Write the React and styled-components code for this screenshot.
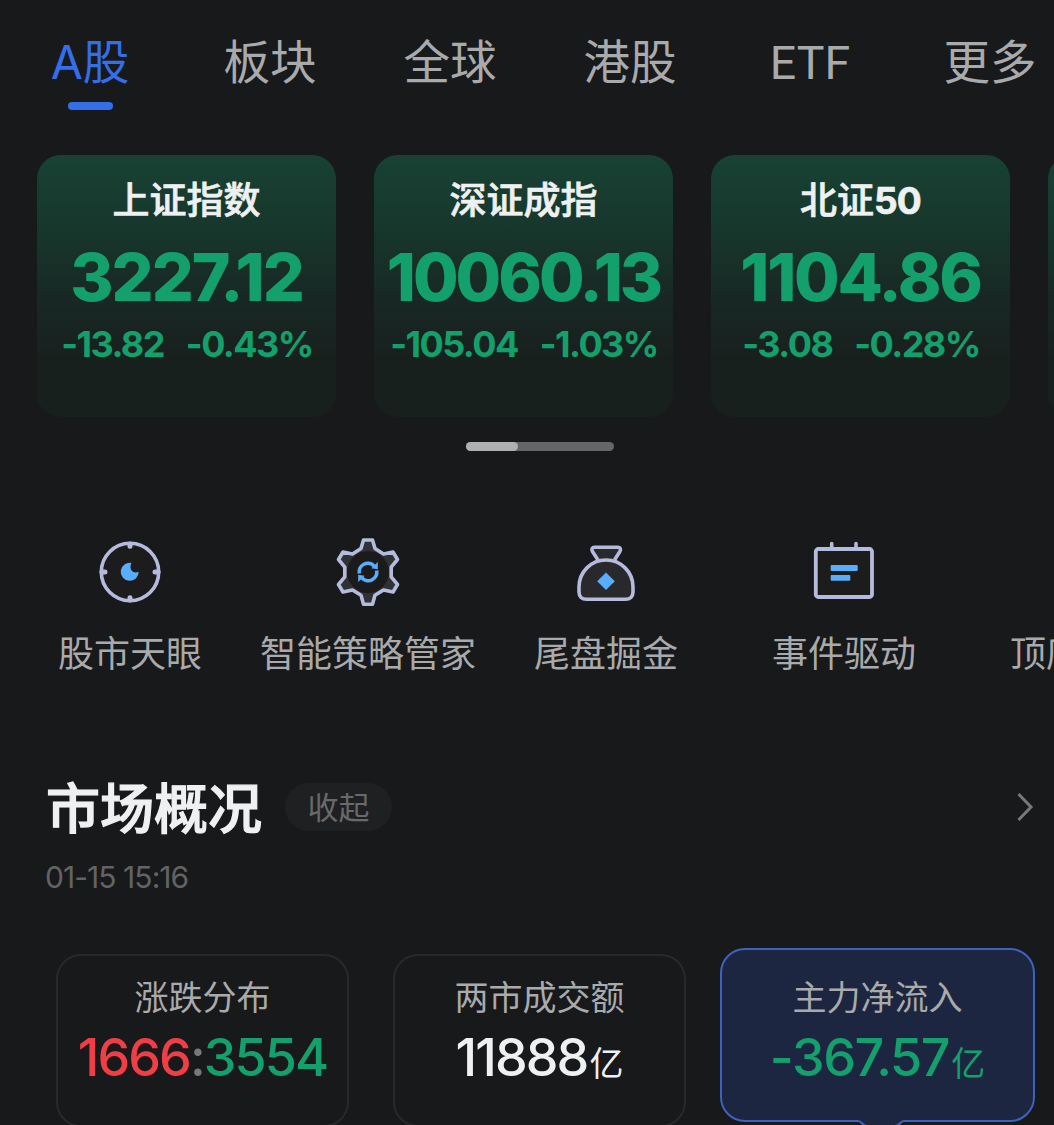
import React from 'react';
import styled, { createGlobalStyle } from 'styled-components';

const mixed = 'Inter, "Noto Sans CJK SC", sans-serif';
const narrow = 'Roboto, "Noto Sans CJK SC", sans-serif';

const colors = {
    page: '#18191b',
    blue: '#346ee8',
    text: '#a9aaac',
    white: '#eef0f1',
    dim: '#626365',
    green: '#14a06c',
    red: '#f03e46',
    outline: '#b5bbdc',
    accent: '#58aefc',
};

const GlobalStyle = createGlobalStyle`
    * {
        box-sizing: border-box;
    }

    body {
        margin: 0;
        background: ${colors.page};
        font-family: ${mixed};
        overflow: hidden;
    }
`;

const Page = styled.main`
    display: flex;
    flex-direction: column;
    width: 1054px;
    height: 1125px;
    overflow: hidden;
    background: ${colors.page};
    white-space: nowrap;

    > * {
        flex-shrink: 0;
    }
`;

const Tabs = styled.nav`
    display: flex;
    height: 155px;
    padding-top: 31px;
`;

const Tab = styled.div`
    display: flex;
    flex: 0 0 180px;
    flex-direction: column;
    align-items: center;
    width: 180px;
    font-family: ${(props) => (props.$active ? mixed : narrow)};
    font-size: 46.5px;
    line-height: ${(props) => (props.$active ? 62 : 64)}px;
    color: ${(props) => (props.$active ? colors.blue : colors.text)};
`;

const TabLine = styled.span`
    width: 45px;
    height: 8px;
    margin-top: 9px;
    border-radius: 4px;
    background: ${colors.blue};
`;

const IndexList = styled.section`
    display: flex;
    gap: 38px;
    padding-left: 37px;
`;

const IndexCard = styled.article`
    display: flex;
    flex: 0 0 299px;
    flex-direction: column;
    align-items: center;
    height: 262px;
    padding-top: 21px;
    border-radius: 24px;
    background: linear-gradient(180deg, #184233 0%, #17372c 28%, #182824 55%, #18201e 78%, #18201e 100%);
`;

const IndexName = styled.h2`
    margin: 0;
    font-size: 37px;
    font-weight: 500;
    line-height: 50px;
    color: ${colors.white};
    -webkit-text-stroke: 0.7px ${colors.white};

    b {
        font-weight: 700;
        letter-spacing: -0.8px;
    }
`;

const IndexValue = styled.div`
    margin-top: 13px;
    font-size: 66px;
    font-weight: 800;
    line-height: 76px;
    letter-spacing: ${(props) => props.$spacing}px;
    color: ${colors.green};
`;

const IndexChange = styled.div`
    display: flex;
    gap: 22px;
    margin-top: 7px;
    padding-left: 1px;
    font-size: 36px;
    font-weight: 700;
    line-height: 44px;
    letter-spacing: -1.55px;
    color: ${colors.green};
`;

const Track = styled.div`
    width: 148px;
    height: 9px;
    margin: 25px 0 0 466px;
    border-radius: 5px;
    background: #656668;
`;

const Thumb = styled.div`
    width: 52px;
    height: 9px;
    border-radius: 5px;
    background: #b0b0b2;
`;

const Tools = styled.section`
    display: flex;
    margin-top: 81px;
    padding-left: 11px;
`;

const Tool = styled.div`
    display: flex;
    flex: 0 0 238px;
    flex-direction: column;
    align-items: ${(props) => (props.$clipped ? 'flex-start' : 'center')};
    padding-left: ${(props) => (props.$clipped ? 47 : 0)}px;
    font-size: 36px;
    line-height: 48px;
    color: ${colors.text};

    svg {
        display: block;
        height: 80px;
        margin-bottom: 18px;
    }
`;

const Blank = styled.div`
    height: 98px;
`;

const SectionHead = styled.header`
    display: flex;
    align-items: center;
    height: 70px;
    margin-top: 94px;
    padding: 0 20px 0 46px;

    svg {
        margin-left: auto;
    }
`;

const SectionTitle = styled.h1`
    margin: 0;
    padding-top: 5px;
    font-size: 54px;
    font-weight: 500;
    line-height: 70px;
    color: ${colors.white};
    -webkit-text-stroke: 1.2px ${colors.white};
`;

const FoldButton = styled.button`
    width: 107px;
    height: 48px;
    margin: 0 0 0 23px;
    padding: 0;
    border: 0;
    border-radius: 24px;
    background: #1f2022;
    font-family: ${mixed};
    font-size: 31px;
    line-height: 49px;
    color: #68696b;
`;

const Time = styled.time`
    margin: 15px 0 0 45px;
    font-size: 30px;
    line-height: 40px;
    letter-spacing: -0.95px;
    color: ${colors.dim};
`;

const Stats = styled.section`
    display: flex;
    align-items: flex-start;
    margin-top: 51px;
    padding-left: 56px;
`;

const Stat = styled.article`
    position: relative;
    display: flex;
    flex: 0 0 ${(props) => (props.$active ? 315 : 293)}px;
    flex-direction: column;
    align-items: center;
    height: ${(props) => (props.$active ? 174 : 173)}px;
    margin: ${(props) => (props.$active ? '0 0 0 -10px' : '6px 44px 0 0')};
    padding-top: ${(props) => (props.$active ? 25 : 19)}px;
    border: 2px solid ${(props) => (props.$active ? '#3d62bf' : '#28292b')};
    border-radius: 25px;
    background: ${(props) => (props.$active ? '#1d2640' : 'transparent')};
`;

const StatName = styled.div`
    font-size: 34px;
    line-height: 46px;
    color: ${colors.text};
`;

const StatValue = styled.div`
    margin-top: 4px;
    font-size: 52px;
    font-weight: 500;
    line-height: 66px;
    letter-spacing: ${(props) => props.$spacing}px;
    color: ${(props) => props.$color};
`;

const Tint = styled.span`
    color: ${(props) => props.$color};
`;

const Unit = styled.small`
    margin-left: 2px;
    font-size: 34px;
    font-weight: 400;
    letter-spacing: 0;
`;

const Pointer = styled.svg`
    position: absolute;
    left: 136px;
    bottom: -6px;
`;

function EyeIcon() {
    return (
        <svg width='80' height='80' viewBox='0 0 80 80' fill='none'>
            <circle cx='40' cy='40' r='28.7' fill='#1c1c1d' stroke={colors.outline} strokeWidth='3.6' />
            <path d='M40 12v2.2M40 65.8v2.2M12 40h3M65 40h3' stroke={colors.outline} strokeWidth='5' strokeLinecap='round' />
            <path
                d='M41.5 31A9 9 0 1 0 48.7 39.8C45.7 41.3 42.3 40.3 41 37.6C40.2 35.5 40.4 33 41.5 31z'
                fill={colors.accent}
            />
        </svg>
    );
}

function GearIcon() {
    return (
        <svg width='80' height='80' viewBox='0 0 80 80' fill='none'>
            <path
                d='M35.5 8h9l2.5 8.5l8.5 5.5l9.5-2l4.500 7.500l-6.300 7.700v9.600l6.300 7.700l-4.500 7.500l-9.500-2l-8.500 5.300l-2.500 9h-9l-2.500-9l-8.500-5.300l-9.500 2l-4.500-7.500l6.300-7.700v-9.600l-6.300-7.700l4.500-7.500l9.500 2l8.500-5.500z'
                fill='#303135'
                stroke={colors.outline}
                strokeWidth='3.6'
                strokeLinejoin='round'
            />
            <circle cx='40' cy='40' r='21' fill='#1c1b1c' />
            <path
                d='M31.3 41.5a8.7 8.700 0 0 1 14.800-7.600M48.700 38.500a8.700 8.700 0 0 1-14.800 7.600'
                stroke={colors.accent}
                strokeWidth='3.6'
            />
            <path d='M49.800 30v7.200l-6.500-1zM30.200 50v-7.200l6.500 1z' fill={colors.accent} />
        </svg>
    );
}

function BagIcon() {
    return (
        <svg width='80' height='80' viewBox='0 0 80 80' fill='none' stroke={colors.outline} strokeWidth='3.6' strokeLinejoin='round'>
            <path d='M32 28l-5.500-8.500c-1.400-2.200-.3-4.300 2-4.300h23.400c2.300 0 3.400 2.100 2 4.300L48.500 28' fill='#29292b' />
            <path d='M40 28c15 0 27 12 27 27v5c0 4.500-3 7.300-7.500 7.300h-39c-4.500 0-7.500-2.800-7.500-7.300v-5c0-15 12-27 27-27z' fill='#29292b' />
            <path d='M40 40.500l8.800 8.800l-8.800 8.800l-8.800-8.800z' fill={colors.accent} stroke='none' />
        </svg>
    );
}

function EventIcon() {
    return (
        <svg width='80' height='80' viewBox='0 0 80 80' fill='none'>
            <rect x='11.8' y='17' width='56.2' height='48' rx='2.5' fill='#1d1c1d' stroke={colors.outline} strokeWidth='3.8' />
            <path d='M27.7 11.5v5M52 11.5v5' stroke={colors.outline} strokeWidth='3.6' strokeLinecap='round' />
            <rect x='26.7' y='33' width='27' height='6' rx='1' fill={colors.accent} />
            <rect x='26.7' y='43' width='19.6' height='5.8' rx='1' fill={colors.accent} />
        </svg>
    );
}

const tabs = ['A股', '板块', '全球', '港股', 'ETF', '更多'];

const indexes = [
    { name: '上证指数', value: '3227.12', change: '-13.82', percent: '-0.43%', spacing: -2 },
    { name: '深证成指', value: '10060.13', change: '-105.04', percent: '-1.03%', spacing: -3 },
    { name: '北证', suffix: '50', value: '1104.86', change: '-3.08', percent: '-0.28%', spacing: -2.2 },
];

const tools = [
    { name: '股市天眼', Icon: EyeIcon },
    { name: '智能策略管家', Icon: GearIcon },
    { name: '尾盘掘金', Icon: BagIcon },
    { name: '事件驱动', Icon: EventIcon },
];

function App() {
    return (
        <Page>
            <GlobalStyle />
            <Tabs>
                {tabs.map((tab, i) => (
                    <Tab key={tab} $active={i === 0}>
                        {tab}
                        {i === 0 && <TabLine />}
                    </Tab>
                ))}
            </Tabs>

            <IndexList>
                {indexes.map((item) => (
                    <IndexCard key={item.name}>
                        <IndexName>
                            {item.name}
                            {item.suffix && <b>{item.suffix}</b>}
                        </IndexName>
                        <IndexValue $spacing={item.spacing}>{item.value}</IndexValue>
                        <IndexChange>
                            <span>{item.change}</span>
                            <span>{item.percent}</span>
                        </IndexChange>
                    </IndexCard>
                ))}
                <IndexCard />
            </IndexList>
            <Track>
                <Thumb />
            </Track>

            <Tools>
                {tools.map(({ name, Icon }) => (
                    <Tool key={name}>
                        <Icon />
                        {name}
                    </Tool>
                ))}
                <Tool $clipped>
                    <Blank />
                    顶底
                </Tool>
            </Tools>

            <SectionHead>
                <SectionTitle>市场概况</SectionTitle>
                <FoldButton>收起</FoldButton>
                <svg width='18' height='32' viewBox='0 0 18 32' fill='none'>
                    <path d='M2.5 3l12.5 13l-12.5 13' stroke='#77787a' strokeWidth='3' />
                </svg>
            </SectionHead>
            <Time>01-15 15:16</Time>

            <Stats>
                <Stat>
                    <StatName>涨跌分布</StatName>
                    <StatValue $spacing={-1.9} $color={colors.green}>
                        <Tint $color={colors.red}>1666</Tint>
                        <Tint $color='#77787a'>:</Tint>
                        3554
                    </StatValue>
                </Stat>
                <Stat>
                    <StatName>两市成交额</StatName>
                    <StatValue $spacing={-1.9} $color={colors.white}>
                        11888<Unit>亿</Unit>
                    </StatValue>
                </Stat>
                <Stat $active>
                    <StatName>主力净流入</StatName>
                    <StatValue $spacing={-1.4} $color={colors.green}>
                        -367.57<Unit>亿</Unit>
                    </StatValue>
                    <Pointer width='46' height='8' viewBox='0 0 46 8'>
                        <path d='M0 0h46v2l-5 6H5L0 2z' fill='#1d2640' />
                        <path d='M0 3c4 0 4 5 9 5M46 3c-4 0-4 5-9 5' fill='none' stroke='#3d62bf' strokeWidth='2' />
                    </Pointer>
                </Stat>
            </Stats>
        </Page>
    );
}

export default App;
